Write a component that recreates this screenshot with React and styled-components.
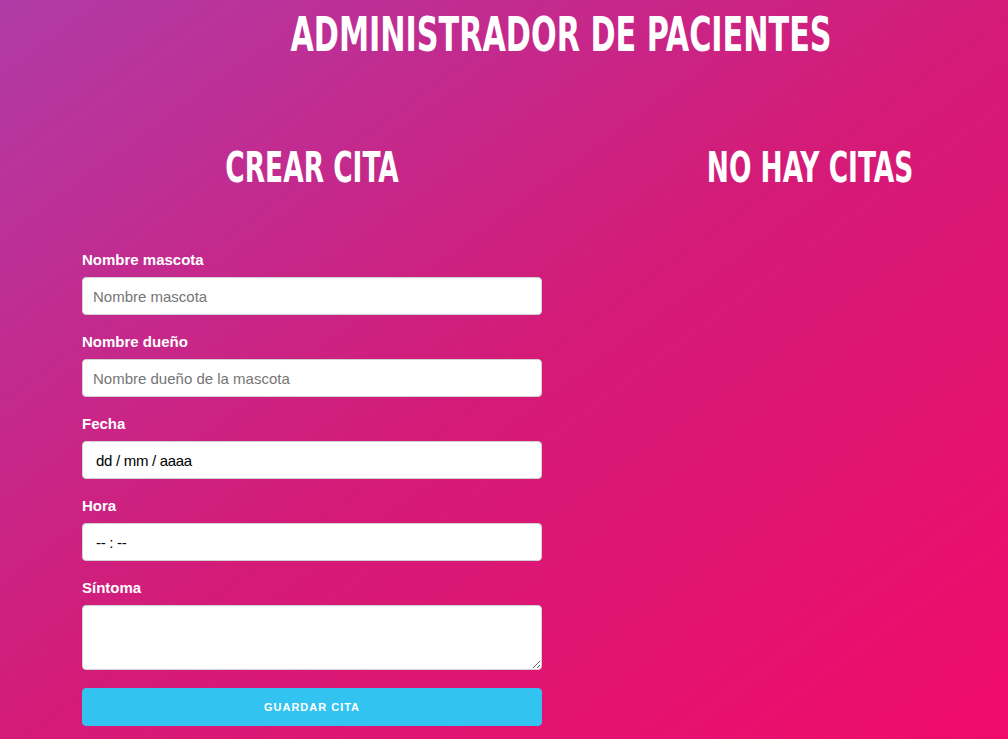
import React from "react";
import styled, { createGlobalStyle } from "styled-components";

const Global = createGlobalStyle`
  html, body { margin: 0; padding: 0; height: 100%; overflow: hidden; }
  body {
    background: linear-gradient(to right bottom, #b03ba6 0%, #d41b78 50%, #f00b6a 100%);
    font-family: "Liberation Sans", Arial, sans-serif;
    color: #fff;
  }
  #root { min-height: 100%; }
`;

const Container = styled.div`
  width: 958px;
  margin-left: 82px;
`;

const Title = styled.h1`
  margin: 0;
  padding-top: 10px;
  text-align: center;
  font-family: "DejaVu Sans Condensed", "DejaVu Sans", sans-serif;
  font-weight: 700;
  font-size: 48px;
  line-height: 48px;
  text-transform: uppercase;
  color: #fff;
  transform: scaleX(0.7);
`;

const Row = styled.div`
  display: grid;
  grid-template-columns: 460px 460px;
  column-gap: 38px;
  margin-top: 86px;
`;

const Column = styled.div`
  display: flex;
  flex-direction: column;
`;

const Heading = styled.h2`
  margin: 0 0 56px;
  text-align: center;
  font-family: "DejaVu Sans Condensed", "DejaVu Sans", sans-serif;
  font-weight: 700;
  font-size: 42px;
  line-height: 48px;
  text-transform: uppercase;
  color: #fff;
  transform: scaleX(0.7);
`;

const Form = styled.form`
  display: flex;
  flex-direction: column;
`;

const Label = styled.label`
  display: block;
  font-family: "Liberation Sans", Arial, sans-serif;
  font-weight: 700;
  font-size: 15px;
  line-height: 24px;
  margin-bottom: 5px;
  color: #fff;
`;

const Input = styled.input`
  box-sizing: border-box;
  width: 100%;
  height: 38px;
  margin: 0 0 15px;
  padding: 6px ${(p) => (p.$native ? "13px" : "10px")};
  border: 1px solid #d1d1d1;
  border-radius: 4px;
  background: #fff;
  font-family: "Liberation Sans", Arial, sans-serif;
  font-size: 15px;
  color: #222;
  outline: none;
  &::placeholder {
    color: ${(p) => (p.$native ? "#000" : "#757575")};
    opacity: 1;
    letter-spacing: ${(p) => (p.$native ? "-0.3px" : "0")};
  }
`;

const TextArea = styled.textarea`
  box-sizing: border-box;
  width: 100%;
  min-height: 65px;
  height: 65px;
  margin: 0 0 18px;
  padding: 6px 10px;
  border: 1px solid #d1d1d1;
  border-radius: 4px;
  background: #fff;
  font-family: "Liberation Sans", Arial, sans-serif;
  font-size: 15px;
  outline: none;
  display: block;
`;

const Button = styled.button`
  box-sizing: border-box;
  width: 100%;
  height: 38px;
  padding: 0 30px;
  border: 1px solid #33c3f0;
  border-radius: 4px;
  background: #33c3f0;
  color: #fff;
  font-family: "Liberation Sans", Arial, sans-serif;
  font-size: 11px;
  font-weight: 700;
  letter-spacing: 1px;
  text-transform: uppercase;
  cursor: pointer;
`;

const fields = [
  { id: "mascota", label: "Nombre mascota", placeholder: "Nombre mascota" },
  { id: "propietario", label: "Nombre dueño", placeholder: "Nombre dueño de la mascota" },
  { id: "fecha", label: "Fecha", placeholder: "dd / mm / aaaa", native: true },
  { id: "hora", label: "Hora", placeholder: "-- : --", native: true },
];

export default function App() {
  return (
    <>
      <Global />
      <Container>
        <Title>Administrador de pacientes</Title>
        <Row>
          <Column>
            <Heading>Crear cita</Heading>
            <Form onSubmit={(e) => e.preventDefault()}>
              {fields.map((f) => (
                <React.Fragment key={f.id}>
                  <Label htmlFor={f.id}>{f.label}</Label>
                  <Input id={f.id} type="text" placeholder={f.placeholder} $native={f.native} />
                </React.Fragment>
              ))}
              <Label htmlFor="sintomas">Síntoma</Label>
              <TextArea id="sintomas" />
              <Button type="submit">Guardar cita</Button>
            </Form>
          </Column>
          <Column>
            <Heading>No hay citas</Heading>
          </Column>
        </Row>
      </Container>
    </>
  );
}
